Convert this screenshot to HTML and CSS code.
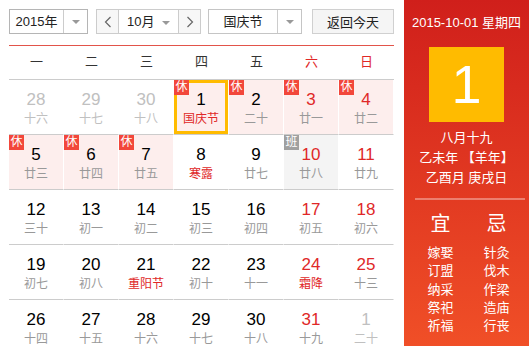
FILE: index.html
```html
<!DOCTYPE html>
<html lang="zh-CN">
<head>
    <meta charset="UTF-8">
    <meta name="viewport" content="width=device-width, initial-scale=1.0">
    <title>万年历</title>
    <link rel="stylesheet" href="styles.css">
</head>
<body>
    <div class="rili">
        <div class="main">
            <div class="toolbar">
                <div class="sel sel-year">
                    <span class="sel-text">2015年</span>
                    <span class="sel-arrow"><i class="tri"></i></span>
                </div>
                <div class="sel sel-month">
                    <span class="nav">
                        <svg width="8" height="12" viewBox="0 0 8 12"><polyline points="6.5,1 1.5,6 6.5,11" fill="none" stroke="#666" stroke-width="1.2"/></svg>
                    </span>
                    <span class="sel-text">10月 <i class="tri"></i></span>
                    <span class="nav">
                        <svg width="8" height="12" viewBox="0 0 8 12"><polyline points="1.5,1 6.5,6 1.5,11" fill="none" stroke="#666" stroke-width="1.2"/></svg>
                    </span>
                </div>
                <div class="sel sel-holiday">
                    <span class="sel-text">国庆节</span>
                    <span class="sel-arrow"><i class="tri"></i></span>
                </div>
                <button class="btn-today">返回今天</button>
            </div>

            <div class="week">
                <span>一</span><span>二</span><span>三</span><span>四</span><span>五</span>
                <span class="wkend">六</span><span class="wkend">日</span>
            </div>

            <div class="days">
                <div class="day other"><b>28</b><em>十六</em></div>
                <div class="day other"><b>29</b><em>十七</em></div>
                <div class="day other"><b>30</b><em>十八</em></div>
                <div class="day rest today"><span class="tag">休</span><b>1</b><em class="fest">国庆节</em></div>
                <div class="day rest"><span class="tag">休</span><b>2</b><em>二十</em></div>
                <div class="day rest wkend"><span class="tag">休</span><b>3</b><em>廿一</em></div>
                <div class="day rest wkend"><span class="tag">休</span><b>4</b><em>廿二</em></div>

                <div class="day rest"><span class="tag">休</span><b>5</b><em>廿三</em></div>
                <div class="day rest"><span class="tag">休</span><b>6</b><em>廿四</em></div>
                <div class="day rest"><span class="tag">休</span><b>7</b><em>廿五</em></div>
                <div class="day"><b>8</b><em class="fest">寒露</em></div>
                <div class="day"><b>9</b><em>廿七</em></div>
                <div class="day work wkend"><span class="tag">班</span><b>10</b><em>廿八</em></div>
                <div class="day wkend"><b>11</b><em>廿九</em></div>

                <div class="day"><b>12</b><em>三十</em></div>
                <div class="day"><b>13</b><em>初一</em></div>
                <div class="day"><b>14</b><em>初二</em></div>
                <div class="day"><b>15</b><em>初三</em></div>
                <div class="day"><b>16</b><em>初四</em></div>
                <div class="day wkend"><b>17</b><em>初五</em></div>
                <div class="day wkend"><b>18</b><em>初六</em></div>

                <div class="day"><b>19</b><em>初七</em></div>
                <div class="day"><b>20</b><em>初八</em></div>
                <div class="day"><b>21</b><em class="fest">重阳节</em></div>
                <div class="day"><b>22</b><em>初十</em></div>
                <div class="day"><b>23</b><em>十一</em></div>
                <div class="day wkend"><b>24</b><em class="fest">霜降</em></div>
                <div class="day wkend"><b>25</b><em>十三</em></div>

                <div class="day"><b>26</b><em>十四</em></div>
                <div class="day"><b>27</b><em>十五</em></div>
                <div class="day"><b>28</b><em>十六</em></div>
                <div class="day"><b>29</b><em>十七</em></div>
                <div class="day"><b>30</b><em>十八</em></div>
                <div class="day wkend"><b>31</b><em>十九</em></div>
                <div class="day other"><b>1</b><em>二十</em></div>
            </div>
        </div>

        <div class="side">
            <div class="side-date">2015-10-01 星期四</div>
            <div class="side-day">1</div>
            <div class="side-lunar">
                <p>八月十九</p>
                <p>乙未年 【羊年】</p>
                <p>乙酉月 庚戌日</p>
            </div>
            <div class="side-line"></div>
            <div class="yiji">
                <div class="yiji-col">
                    <h3>宜</h3>
                    <p>嫁娶</p><p>订盟</p><p>纳采</p><p>祭祀</p><p>祈福</p>
                </div>
                <div class="yiji-col">
                    <h3>忌</h3>
                    <p>针灸</p><p>伐木</p><p>作梁</p><p>造庙</p><p>行丧</p>
                </div>
            </div>
        </div>
    </div>
</body>
</html>
```

FILE: styles.css
```css
:root {
    --red: #e02828;
    --pink: #fdeeed;
    --line: #cccccc;
}
* {
    box-sizing: border-box;
}
body {
    margin: 0;
    height: 346px;
    overflow: hidden;
    background: #fff;
    font-family: "Liberation Sans", "Noto Sans CJK SC", sans-serif;
    color: #333;
}
.rili {
    display: flex;
    height: 346px;
}
.main {
    width: 404px;
    padding: 9px 10px 0 9px;
}

/* toolbar */
.toolbar {
    display: flex;
    height: 25px;
    margin-bottom: 11px;
}
.sel {
    display: flex;
    height: 25px;
    border: 1px solid #b5b5b5;
    font-size: 13px;
    line-height: 23px;
    color: #222;
}
.sel-text {
    flex: 1;
    text-align: center;
}
.sel-arrow {
    width: 24px;
    border-left: 1px solid #ccc;
    display: flex;
    align-items: center;
    justify-content: center;
}
.tri {
    display: inline-block;
    width: 0;
    height: 0;
    border-left: 4px solid transparent;
    border-right: 4px solid transparent;
    border-top: 4px solid #999;
    vertical-align: middle;
    margin-left: 4px;
}
.sel-arrow .tri {
    margin-left: 0;
}
.sel-year {
    width: 79px;
}
.sel-month {
    width: 105px;
    margin-left: 8px;
    border-color: #ccc;
}
.nav {
    width: 22px;
    display: flex;
    align-items: center;
    justify-content: center;
    background: #f7f7f7;
}
.sel-month .nav:first-child {
    border-right: 1px solid #ccc;
}
.sel-month .nav:last-child {
    border-left: 1px solid #ccc;
}
.sel-holiday {
    width: 94px;
    margin-left: 7px;
    border-color: #c5c5c5;
}
.btn-today {
    width: 82px;
    height: 25px;
    margin-left: 10px;
    padding: 0;
    border: 1px solid #d0d0d0;
    background: #f5f5f5;
    font-family: inherit;
    font-size: 13px;
    color: #222;
}

/* week header */
.week {
    display: grid;
    grid-template-columns: repeat(7, 55px);
    height: 35px;
    border-top: 1px solid #e2544a;
    border-bottom: 1px solid var(--line);
    font-size: 13px;
    line-height: 32px;
    text-align: center;
    color: #333;
}
.week .wkend {
    color: var(--red);
}

/* day grid */
.days {
    display: grid;
    grid-template-columns: repeat(7, 55px);
    grid-auto-rows: 55px;
}
.day {
    position: relative;
    border-bottom: 1px solid var(--line);
    border-right: 1px solid #fff;
    padding-top: 11px;
    text-align: center;
}
.day b {
    display: block;
    font-weight: normal;
    font-size: 17px;
    line-height: 18px;
    color: #000;
}
.day em {
    display: block;
    font-style: normal;
    font-size: 12px;
    line-height: 20px;
    color: #999;
}
.day.wkend b {
    color: var(--red);
}
.day em.fest {
    color: var(--red);
}
.day.other b,
.day.other em {
    color: #c0c0c0;
}
.day.rest {
    background: var(--pink);
}
.day.work {
    background: #f4f4f4;
}
.day.today {
    box-shadow: inset 0 0 0 3px #ffbb00;
    border-right-color: #fff;
}
.tag {
    position: absolute;
    left: 0;
    top: 0;
    width: 15px;
    height: 15px;
    background: #f2473b;
    color: #fff;
    font-size: 12px;
    line-height: 15px;
    text-align: center;
}
.work .tag {
    background: #a0a0a0;
}

/* sidebar */
.side {
    width: 125px;
    height: 346px;
    background: linear-gradient(#d01f1b, #f04f27);
    color: #fff;
    text-align: center;
}
.side-date {
    padding-top: 14px;
    font-size: 13px;
    line-height: 18px;
}
.side-day {
    width: 75px;
    height: 75px;
    margin: 15px auto 0;
    background: #ffbb00;
    font-size: 54px;
    line-height: 75px;
}
.side-lunar {
    margin-top: 6px;
}
.side-lunar p {
    margin: 0;
    font-size: 13px;
    line-height: 20px;
}
.side-line {
    height: 2px;
    margin: 10px 4px 0 11px;
    background: rgba(255, 255, 255, 0.35);
}
.yiji {
    display: flex;
    justify-content: center;
    gap: 30px;
    padding: 11px 0 0 4px;
}
.yiji-col h3 {
    margin: 0 0 7px;
    font-weight: normal;
    font-size: 20px;
    line-height: 26px;
}
.yiji-col p {
    margin: 0;
    font-size: 13px;
    line-height: 18.3px;
}
```
